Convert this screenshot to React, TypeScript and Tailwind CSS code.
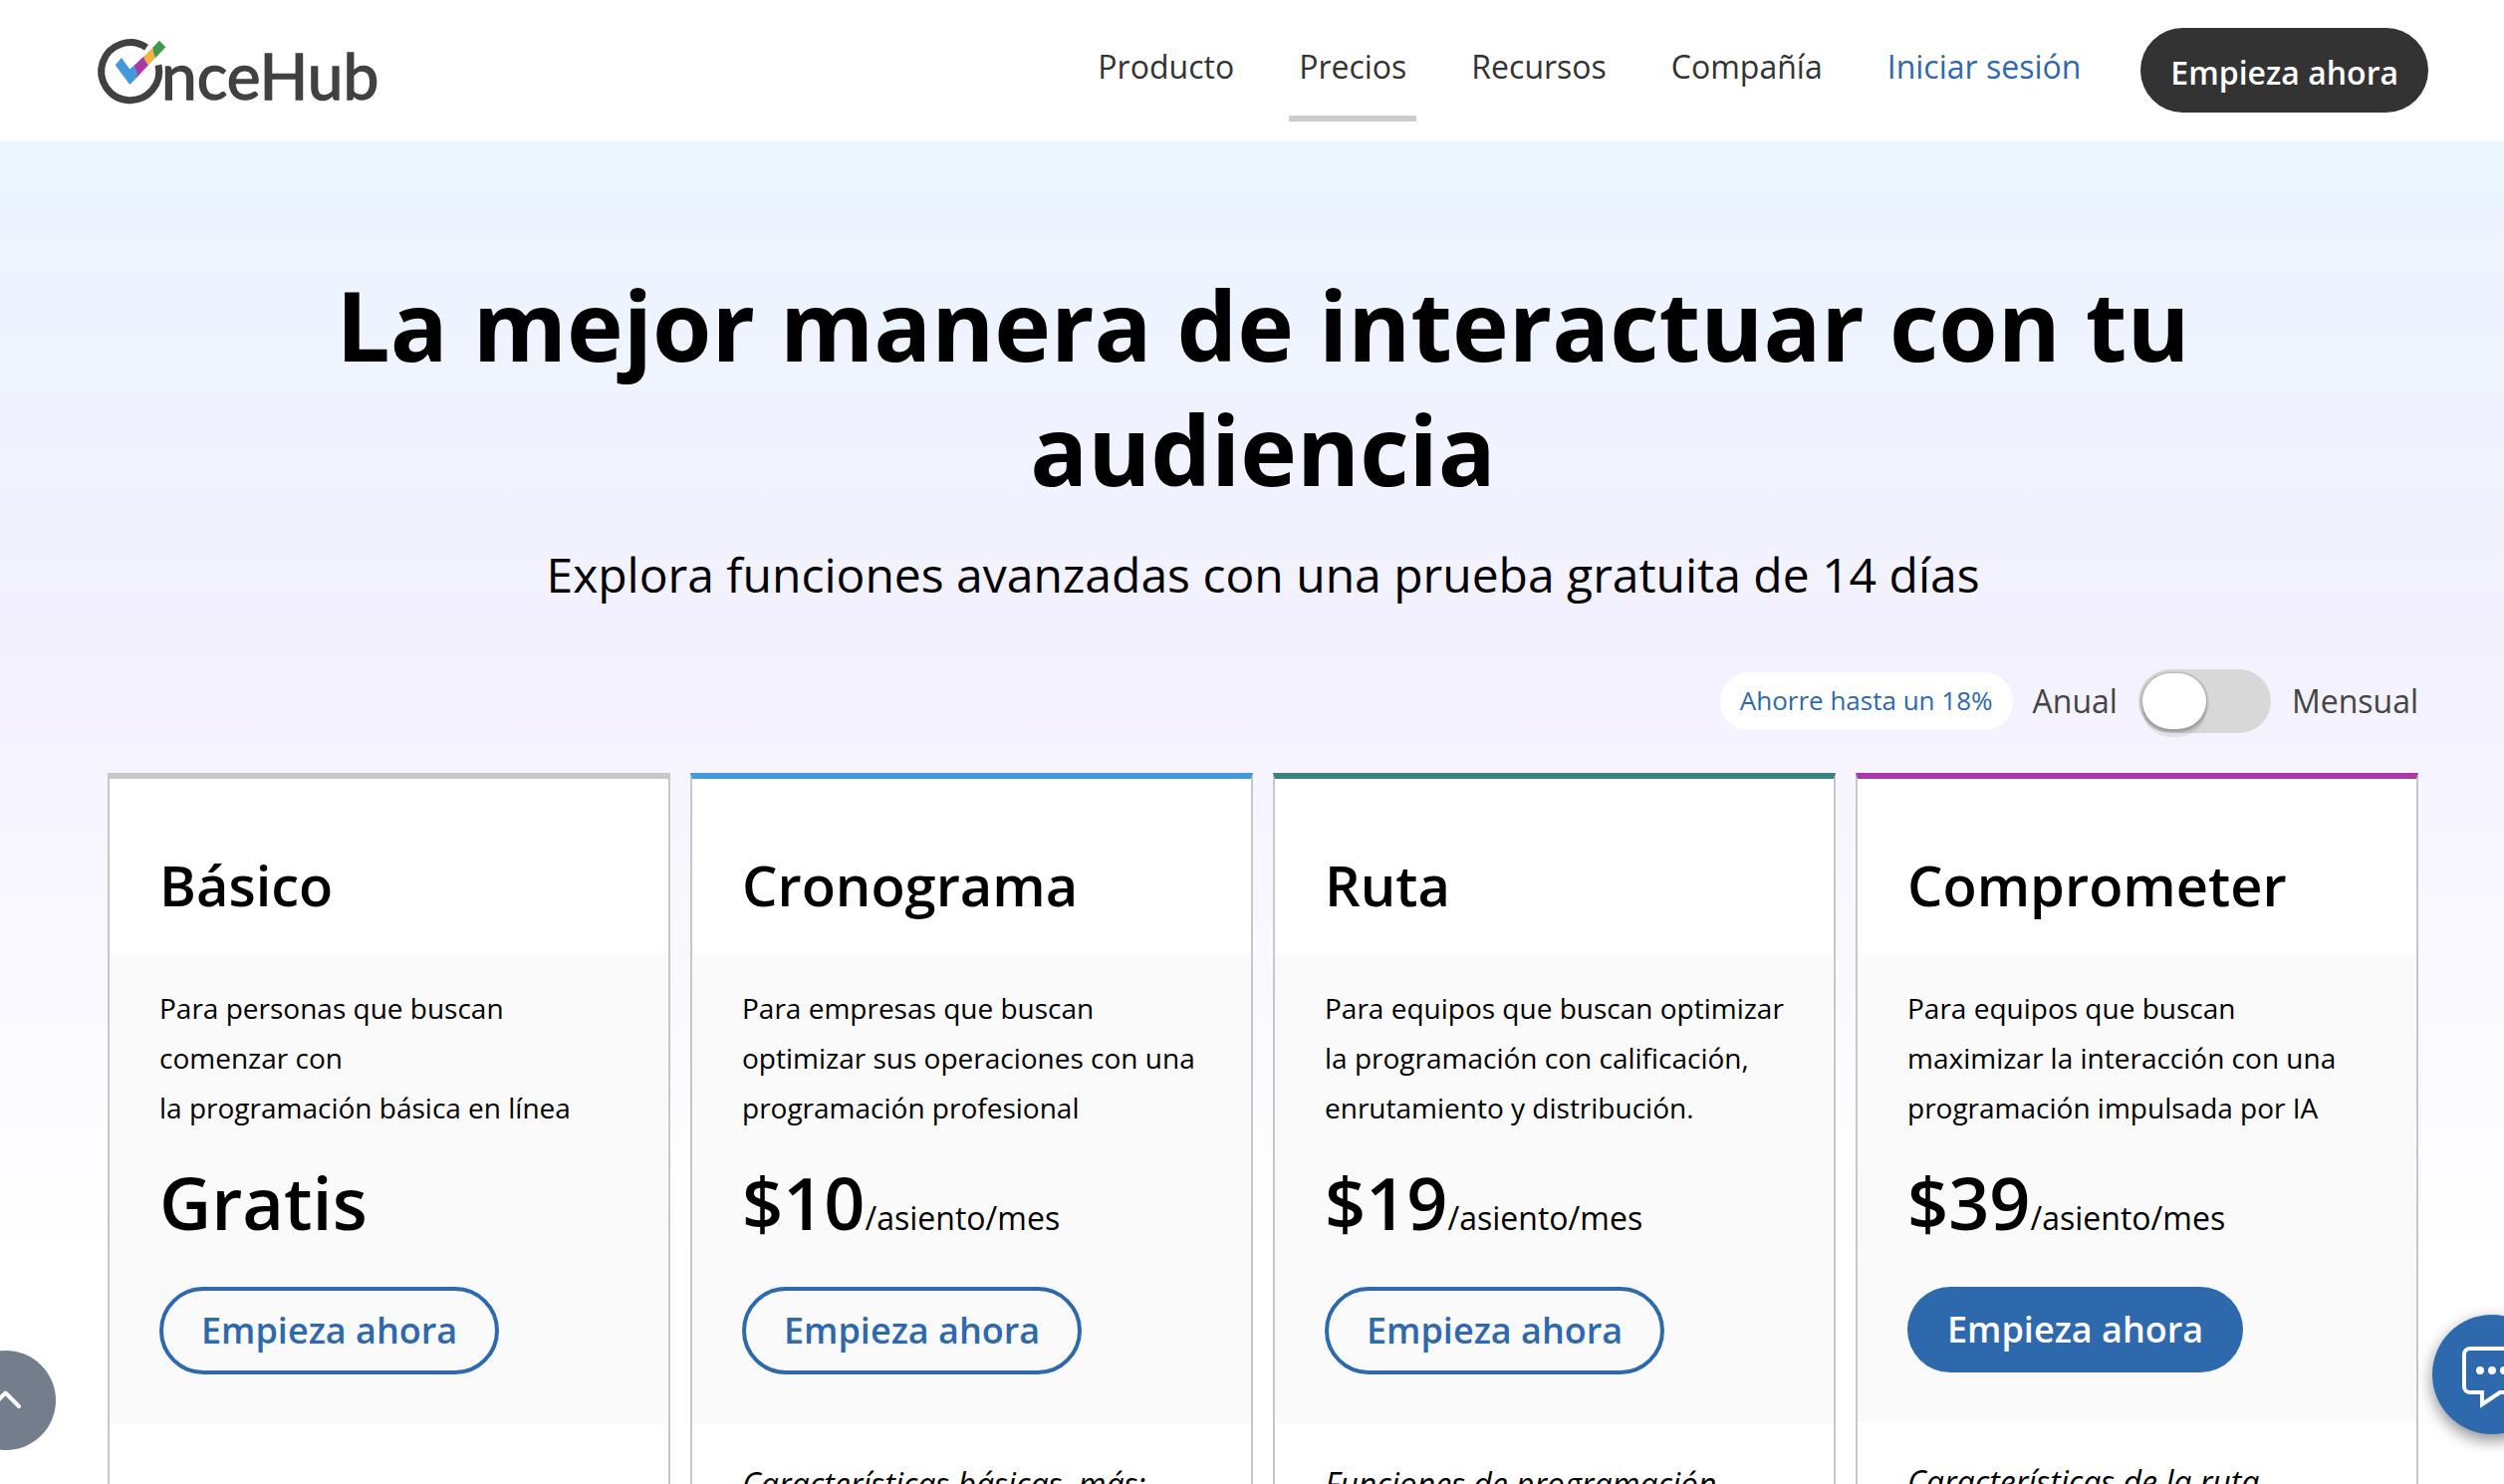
import React, { useState } from 'react';

const navLinks = [
  { label: 'Producto', href: '#producto' },
  { label: 'Precios', href: '#precios' },
  { label: 'Recursos', href: '#recursos' },
  { label: 'Compañía', href: '#compania' },
];

const plans = [
  {
    name: 'Básico',
    description: ['Para personas que buscan', 'comenzar con', 'la programación básica en línea'],
    price: 'Gratis',
    unit: '',
    accent: 'border-t-[#c8c8c8]',
    featured: false,
    features: '',
  },
  {
    name: 'Cronograma',
    description: ['Para empresas que buscan', 'optimizar sus operaciones con una', 'programación profesional'],
    price: '$10',
    unit: '/asiento/mes',
    accent: 'border-t-[#4299dc]',
    featured: false,
    features: 'Características básicas, más:',
  },
  {
    name: 'Ruta',
    description: ['Para equipos que buscan optimizar', 'la programación con calificación,', 'enrutamiento y distribución.'],
    price: '$19',
    unit: '/asiento/mes',
    accent: 'border-t-[#3a837b]',
    featured: false,
    features: 'Funciones de programación',
  },
  {
    name: 'Comprometer',
    description: ['Para equipos que buscan', 'maximizar la interacción con una', 'programación impulsada por IA'],
    price: '$39',
    unit: '/asiento/mes',
    accent: 'border-t-[#a839a6]',
    featured: true,
    features: 'Características de la ruta',
  },
];

function Logo() {
  return (
    <a href="#inicio" aria-label="OnceHub" className="block">
      <svg width="300" height="92" viewBox="0 -8 300 92" className="block overflow-visible">
        <path d="M51 13.7A29 29 0 1 0 63 31.3" fill="none" stroke="#414143" strokeWidth="7" />
        <path d="M19.7 31.3L26 24L34.3 35.5L38.500 31.7L42 37L41 44.3L34.3 51Z" fill="#4299dc" />
        <path d="M38.500 31.7L48.3 22.7L50 27L53 31.3L41 44.3L41.500 38Z" fill="#a839a6" />
        <path d="M48.3 22.7L57.3 13.7L58 18.7L60 24.3L53 31.3L50 27Z" fill="#f4b33f" />
        <path d="M57.3 13.7L64 6.7L70.3 13.3L60 24.3L58 18.7Z" fill="#43984c" />
        <text
          x="66"
          y="66"
          fontSize="64"
          fill="#414143"
          stroke="#414143"
          strokeWidth="1.4"
          fontFamily="Lato, sans-serif"
        >
          nceHub
        </text>
      </svg>
    </a>
  );
}

function Header() {
  return (
    <header className="flex h-[142px] items-start justify-between bg-white pl-[96px] pr-[76px] pt-[26px]">
      <Logo />
      <nav className="flex items-start gap-[45px] pt-[2px] text-[32px] leading-[44px] text-[#333333]">
        {navLinks.map(link => (
          <a
            key={link.label}
            href={link.href}
            className={`mt-[17px] px-[10px] pb-[27px] ${
              link.label === 'Precios' ? 'border-b-[6px] border-[#cccccc]' : ''
            }`}
          >
            {link.label}
          </a>
        ))}
        <a href="#iniciar-sesion" className="mt-[17px] px-[10px] text-[#2e69ae]">
          Iniciar sesión
        </a>
        <button
          type="button"
          className="ml-[5px] h-[85px] rounded-full bg-[#333333] px-[30px] pt-[5px] font-semibold text-white"
        >
          Empieza ahora
        </button>
      </nav>
    </header>
  );
}

function BillingSwitch() {
  const [monthly, setMonthly] = useState(false);

  return (
    <div className="flex items-center justify-end gap-[20px] text-[32px] leading-[44px] text-[#444444]">
      <span className="rounded-full bg-white px-[20px] pb-[10px] pt-[8px] text-[26px] leading-[40px] text-[#2e69ae]">
        Ahorre hasta un 18%
      </span>
      <label className="flex items-center gap-[21px]">
        <span>Anual</span>
        <input
          type="checkbox"
          role="switch"
          aria-label="Facturación mensual"
          checked={monthly}
          onChange={e => setMonthly(e.target.checked)}
          className="h-[64px] w-[133px] appearance-none rounded-full bg-[#d8d8d8] p-[4px] before:block before:h-[56px] before:w-[64px] before:rounded-full before:bg-white before:shadow-[0_8px_1px_rgba(0,0,0,0.08),0_1px_2px_2px_rgba(0,0,0,0.2)] checked:before:ml-auto"
        />
        <span>Mensual</span>
      </label>
    </div>
  );
}

function PlanCard({ plan }: { plan: (typeof plans)[number] }) {
  return (
    <article className={`border-x-2 border-t-[6px] border-x-[#c3c8cd] bg-white ${plan.accent}`}>
      <h2 className="px-[50px] pb-[29px] pt-[66px] text-[56px] font-semibold leading-[80px]">{plan.name}</h2>
      <div className="bg-[#fafafa] px-[50px] pb-[50px] pt-[30px]">
        <p className="text-[28px] leading-[50px]">
          {plan.description.map(line => (
            <span key={line} className="block whitespace-nowrap">
              {line}
            </span>
          ))}
        </p>
        <p className="pt-[21px] text-[32px] leading-[98px]">
          <span className="text-[72px] font-semibold">{plan.price}</span>
          {plan.unit}
        </p>
        <button
          type="button"
          className={`mt-[20px] block rounded-full text-[36px] font-semibold leading-[48px] ${
            plan.featured
              ? 'bg-[#2e69ae] px-[40px] py-[19px] text-white'
              : 'border-4 border-[#2e69ae] px-[38px] py-[16px] text-[#2e69ae]'
          }`}
        >
          Empieza ahora
        </button>
      </div>
      <p className="min-h-[140px] px-[50px] pt-[36px] text-[32px] italic leading-[48px]">{plan.features}</p>
    </article>
  );
}

export default function App() {
  return (
    <div className="h-screen overflow-hidden bg-white font-['Open_Sans',sans-serif] text-black">
      <Header />
      <main className="bg-[linear-gradient(180deg,#ebf6ff_0px,#f4f1ff_500px,#ffffff_1130px)] pl-[108px] pr-[86px] pt-[121px]">
        <h1 className="px-[150px] text-center text-[96px] font-bold leading-[125px]">
          La mejor manera de interactuar con tu audiencia
        </h1>
        <p className="pt-[31px] text-center text-[48px] leading-[66px]">
          Explora funciones avanzadas con una prueba gratuita de 14 días
        </p>
        <div className="pb-[40px] pt-[62px]">
          <BillingSwitch />
        </div>
        <section className="grid grid-cols-4 items-start gap-[20px]">
          {plans.map(plan => (
            <PlanCard key={plan.name} plan={plan} />
          ))}
        </section>
      </main>

      {/* Floating controls */}
      <button
        type="button"
        aria-label="Volver arriba"
        className="fixed -left-[44px] bottom-[34px] flex size-[100px] items-center justify-center rounded-full bg-[#747d8c] text-white"
      >
        <svg width="32" height="20" viewBox="0 0 32 20" fill="none" stroke="currentColor" strokeWidth="4" strokeLinecap="round" strokeLinejoin="round">
          <path d="M2 16L15.500 2.500L29 16" />
        </svg>
      </button>
      <button
        type="button"
        aria-label="Abrir chat"
        className="fixed -right-[48px] bottom-[50px] flex size-[120px] items-center justify-center rounded-full bg-[#2e69ae] text-white shadow-[0_6px_16px_rgba(0,0,0,0.45)]"
      >
        <svg width="64" height="64" viewBox="0 0 64 64" fill="none" stroke="currentColor" strokeWidth="4" className="overflow-visible">
          <path d="M10 6H54a6 6 0 0 1 6 6V44a6 6 0 0 1 -6 6H40L22 62V50H10a6 6 0 0 1 -6 -6V12a6 6 0 0 1 6 -6Z" />
          <g fill="currentColor" stroke="none">
            <circle cx="20" cy="28" r="4" />
            <circle cx="32" cy="28" r="4" />
            <circle cx="44" cy="28" r="4" />
          </g>
        </svg>
      </button>
    </div>
  );
}
